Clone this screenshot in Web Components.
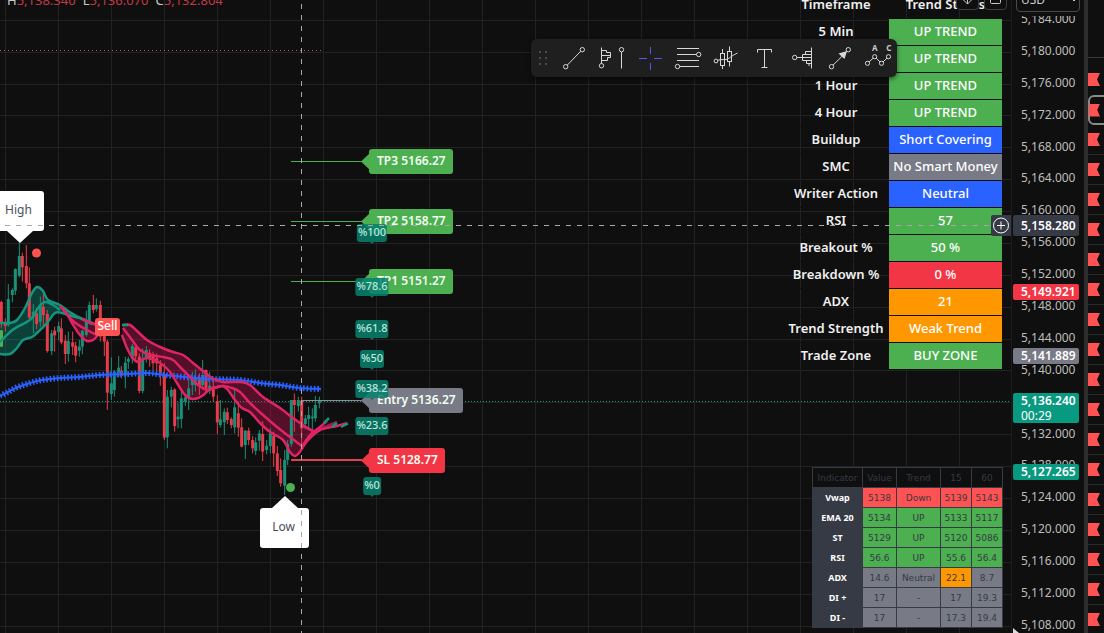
<!DOCTYPE html>
<html lang="en">
<head>
<meta charset="utf-8">
<title>Gold chart</title>
<style>
body{margin:0;background:#0f0f0f;color:#fff;font-family:"Noto Sans","Open Sans",sans-serif;overflow:hidden}
</style>
</head>
<body>
<trading-app></trading-app>
<script>
class Base extends HTMLElement{
  connectedCallback(){
    if(this.shadowRoot)return;
    this.attachShadow({mode:'open'}).innerHTML=this.render();
  }
}

customElements.define('trading-app',class extends Base{
  render(){return `<style>
    :host{display:flex;height:100vh;overflow:hidden}
    chart-pane{flex:1;min-width:0}
    .gutter{width:4px;background:#2d2d2d}
  </style><chart-pane></chart-pane><price-scale></price-scale><div class="gutter"></div><watch-strip></watch-strip>`}
});

/* ---------- plot ---------- */
// Candle series in three consecutive blocks, drawn in third-pixel units.
// Each entry: x, high, body top, body bottom, low, direction.
const SERIES=[
 {x:0,y:180,c:`4 362 366 430 445 r;16 415 425 438 455 r;25 312 357 435 440 g;37 325 330 345 367 g;46 265 267 332 345 g;58 188 228 287 292 g;67 218 228 262 305 r;79 195 258 310 325 r;88 262 310 413 417 r;100 372 395 410 460 g;110 385 400 432 447 r;121 350 375 425 440 g;130 340 380 405 445 r;142 390 402 513 518 r;155 450 460 513 525 g;164 440 452 466 515 r;176 425 438 456 480 g;184 415 445 487 493 r;196 465 482 522 552 r;205 455 483 522 545 g;218 455 487 500 525 r;227 485 497 527 547 r;238 480 500 512 530 g;247 450 452 500 523 g;259 392 422 465 470 g;268 365 375 425 428 g;280 345 375 390 400 r;289 355 375 387 395 g;301 362 375 470 485 r`},
 {x:60,y:320,c:`133 35 40 65 108 r;142 60 65 218 270 r;154 112 190 222 240 g;163 150 155 210 230 g;176 108 143 158 172 g;184 138 152 168 175 r;196 110 128 167 205 g;205 110 117 125 147 g;217 72 78 117 130 g;227 78 82 108 118 r;238 100 110 213 220 r;248 85 115 213 220 g;259 78 90 115 128 g;269 88 98 118 140 r;279 95 102 130 150 r;290 100 115 130 155 r;301 120 135 160 197 r;313 130 168 353 360 r;322 210 230 352 385 g;334 200 210 230 262 g;344 205 208 318 335 r;354 248 290 298 325 g;364 215 235 297 325 g;376 222 232 245 258 g;386 175 205 235 270 g;397 155 180 195 225 g;406 148 175 195 215 g;418 160 175 200 225 r;428 120 165 195 205 g;438 148 150 205 215 r;449 155 197 212 222 g;460 180 200 230 245 r`},
 {x:180,y:340,c:`112 165 183 247 282 r;121 180 238 255 262 g;133 205 215 247 285 g;142 203 217 240 252 r;154 232 237 255 265 r;164 150 202 262 280 g;175 185 220 263 290 r;185 235 262 320 322 r;196 270 272 315 357 g;206 263 272 300 315 r;218 288 300 325 340 r;227 292 307 333 345 g;238 270 280 302 332 g;248 243 282 335 363 r;260 300 317 330 343 g;271 265 280 318 340 g;281 275 287 340 380 r;292 318 340 393 408 r;302 355 390 430 440 r;314 330 360 437 465 g;323 300 312 360 375 g;334 180 180 312 320 g;343 160 180 195 275 r;355 170 180 198 215 g;365 170 182 265 325 r;376 225 235 252 268 g;386 200 225 237 268 g;397 205 230 235 270 g;406 168 195 235 245 g;418 170 180 190 205 g`}
];
// Smooth curve through points given in page pixels.
const curve=(s)=>{
  const p=s.split(' ').map(q=>q.split(',').map(Number));
  let d=`M${p[0]}`;
  for(let i=0;i<p.length-1;i++){
    const a=p[i-1]||p[i],b=p[i],c=p[i+1],e=p[i+2]||c;
    d+=`C${(b[0]+(c[0]-a[0])/6).toFixed(1)},${(b[1]+(c[1]-a[1])/6).toFixed(1)} ${(c[0]-(e[0]-b[0])/6).toFixed(1)},${(c[1]-(e[1]-b[1])/6).toFixed(1)} ${c}`;
  }
  return d;
};
const band=(a,b)=>curve(a)+'L'+curve(b.split(' ').reverse().join(' ')).slice(1)+'Z';

customElements.define('price-plot',class extends Base{
  render(){
    let grid='';
    for(let i=0;i<40;i++)grid+=`<line x1="${5.5+53*i}" x2="${5.5+53*i}" y1="0" y2="100%"/>`;
    for(let i=0;i<32;i++){const y=Math.floor(20.3+31.88*i)+.5;grid+=`<line x1="0" x2="100%" y1="${y}" y2="${y}"/>`}
    const col={g:'#199078',r:'#e63c4b'};
    const candles=SERIES.map(s=>`<g transform="translate(${s.x} ${s.y}) scale(.33333)">`+s.c.split(';').map(r=>{
      const [x,h,t,b,l,k]=r.split(' ');
      return `<rect x="${x-1.5}" y="${h}" width="3" height="${l-h}" fill="${col[k]}"/><rect x="${x-4.5}" y="${t}" width="9" height="${b-t}" fill="${col[k]}"/>`}).join('')+'</g>').join('');
    const gU='0,323 10,323 17,320 25,308 32,293 37,287 43,291 48,300 60,305 68,311 80,318 92,324';
    const gM='0,342 10,332 17,327 25,323 32,318 38,308 45,302 53,305 60,310';
    const gL='0,354 10,354 17,348 23,340 32,337 38,332 47,323 55,313 62,313 68,315 80,318 92,323 100,326';
    const p1U='60,306 68,313 80,316 92,323 100,326';
    const p1L='60,306 67,314 72,323 80,335 87,341 93,340 100,333';
    const p2U='123,325 130,325 137,331 147,340 160,347 173,352 183,355 193,363 203,371 212,378 223,382 240,382 250,385 263,397 280,408 293,418 303,425 313,431';
    const p2M='123,328 132,340 140,350 150,355 163,357 173,360 180,367 188,375 198,385 208,390 222,386 232,388 240,392 250,403 263,415 277,427 290,437 303,447';
    const p2L='122,335 127,348 132,357 138,362 147,358 160,363 170,372 177,383 185,395 193,399 202,396 210,389 217,387 223,386 228,390 235,400 242,408 250,412 260,423 270,432 283,440 290,452 295,456 299,453 303,447';
    const ema='0,396 8,392 18,387 30,383 42,380 60,378 80,377 100,375 127,374 147,373 165,375 185,377 212,379 240,380 260,383 280,385 300,388 321,389';
    const pk='fill="none" stroke="#df2465" stroke-width="2.500"',gn='fill="none" stroke="#15947f" stroke-width="2.500"';
    return `<style>:host{display:block;position:absolute;inset:0}svg{display:block;width:100%;height:100%}</style>
    <svg aria-hidden="true">
      <g stroke="#222222">${grid}</g>
      <line x1="0" x2="321" y1="50.5" y2="50.5" stroke="#a06455" stroke-dasharray="1 3"/>
      <line x1="0" x2="100%" y1="401.5" y2="401.5" stroke="#1a9a7c" stroke-dasharray="1 2"/>
      <path d="${band(gU,gL)}" fill="#089981" fill-opacity=".36"/>
      <path d="${band(p1U,p1L)}" fill="#e0105f" fill-opacity=".33"/>
      <path d="${band(p2U,p2L)}" fill="#e0105f" fill-opacity=".33"/>
      ${candles}
      <rect x="0" y="330" width="3" height="17" rx="1" fill="#4caf50"/>
      <path d="${curve(ema)}" fill="none" stroke="#2962ff" stroke-width="2"/>
      <path d="${curve(ema)}" fill="none" stroke="#2962ff" stroke-width="6" stroke-dasharray="1.6 1.933"/>
      <path d="${curve(gU)}" ${gn}/><path d="${curve(gM)}" ${gn}/><path d="${curve(gL)}" ${gn}/>
      <path d="${curve(p1L)}" ${pk}/><path d="${curve('62,308 73,321 87,330 97,335')}" ${pk}/><path d="${curve('82,319 92,323 100,326')}" ${pk}/>
      <path d="${curve(p2U)}" ${pk}/><path d="${curve(p2M)}" ${pk}/><path d="${curve(p2L)}" ${pk}/>
      <path d="${curve('303,447 308,440 320,430 337,426 347,423')}" ${pk}/>
      <path d="${curve('303,445 310,435 320,427 327,421')}" ${pk}/>
      <path d="${curve('303,426 313,431 322,428 337,422')}" ${pk} opacity=".7"/>
      <path d="M324,423L329,418M332,427L337,423M341,427L348,423.5M122,325L128,325" ${gn}/>
      <circle cx="36.5" cy="253" r="4.5" fill="#ff5252"/>
      <circle cx="290.500" cy="487.500" r="4.500" fill="#4caf50"/>
      <path d="M291 161.500H362M291 221.500H362M291 281.500H362" stroke="#4caf50"/>
      <path d="M302 400.500H362" stroke="#8a8d96"/><path d="M291 460H362" stroke="#dc4450" stroke-width="2"/>
    </svg>`}
});

/* ---------- chart labels ---------- */
customElements.define('level-tag',class extends Base{
  render(){return `<style>
    :host{display:block;position:absolute;z-index:1;left:361px;height:25px;padding:0 7px 0 16px;font:600 12px/24px "Noto Sans",sans-serif;color:#f4fff4;white-space:nowrap;--c:#4caf50}
    :host([kind=entry]){--c:#787b86}
    :host([kind=stop]){--c:#f23645}
    i{position:absolute;z-index:-1;inset:0 0 0 8px;background:var(--c);border-radius:3px}
    b{position:absolute;z-index:-1;left:0;top:4px;width:9px;height:17px;background:var(--c);clip-path:polygon(0 50%,100% 0,100% 100%)}
  </style><i></i><b></b><slot></slot>`}
});
customElements.define('fib-tag',class extends Base{
  render(){return `<style>
    :host{display:block;position:absolute;z-index:2;left:372px;transform:translateX(-50%);height:18px;padding:0 1px;border-radius:3px;background:rgba(8,128,110,.86);color:#b9e6dc;font:500 11px/16px "Noto Sans",sans-serif;white-space:nowrap}
    :host::after{content:"";position:absolute;left:50%;top:18px;width:4px;height:2px;margin-left:-2px;background:#08705f;clip-path:polygon(0 0,100% 0,50% 100%)}
  </style><slot></slot>`}
});
customElements.define('pivot-label',class extends Base{
  render(){return `<style>
    :host{display:block;box-sizing:border-box;position:absolute;width:49px;height:40px;padding-right:2px;border-radius:3px;background:#fff;color:#4b4e58;font:12px/38px "Noto Sans",sans-serif;text-align:center}
    :host::after{content:"";position:absolute;left:12px;top:40px;width:26px;height:12px;background:#fff;clip-path:polygon(0 0,100% 0,50% 100%)}
    :host([up])::after{top:-12px;clip-path:polygon(0 100%,100% 100%,50% 0)}
  </style><slot></slot>`}
});

/* ---------- drawing toolbar ---------- */
const TOOLS=[
 ['Trend line','<circle cx="11.700" cy="27.700" r="2.200"/><circle cx="28.300" cy="10.700" r="2.200"/><path d="M13.300 26.100L26.700 12.300"/>'],
 ['Fixed range volume profile','<path d="M9.500 8.500V24.500M9.500 11.500H14.500V13.500H18.500V18.500H15.500V21.500H9.500M9.500 16.500H18.500M29.500 13V29.500"/><circle cx="9.500" cy="26.700" r="2.200"/><circle cx="29.500" cy="10.700" r="2.200"/>'],
 ['Cross line','<path stroke="#4a5bf0" d="M20.500 8V15M20.500 24V31M9 19.500H17M24 19.500H32"/>'],
 ['Fib retracement','<path d="M9 9.500H31M9 15.500H28.500M9 21.500H31M11.500 27.500H31"/><circle cx="30.700" cy="15.500" r="2.200"/><circle cx="9.500" cy="27.500" r="2.200"/>'],
 ['Bars pattern','<rect x="14.500" y="14.500" width="4" height="12"/><rect x="21.500" y="12.500" width="4" height="10"/><path d="M16.500 10V14.500M16.500 26.500V30M23.500 7.500V12.500M23.500 22.500V27.500M12 21.300C15 20 17 21 20 20.500S25 17 31.500 14"/><circle cx="10" cy="22" r="1.900"/>'],
 ['Text','<path d="M13.500 13.500V10.500H27.500V13.500M20.500 10.500V28.500M17.500 28.500H23.500"/>'],
 ['Anchored volume profile','<path d="M29.500 8.500V29.500M29.500 12.500H23.500V15.500M29.500 15.500H20.500V18.500M14.900 18.500H29.500M20.500 18.500V21.500H29.500M24.500 21.500V24.500H29.500M27 24.500V27"/><circle cx="12.700" cy="18.500" r="2.200"/>'],
 ['Arrow','<circle cx="11.500" cy="27.700" r="2.200"/><circle cx="28.300" cy="10.700" r="2.200"/><path d="M13 26.200L22 17.300"/><path fill="#d8d8d8" stroke="none" d="M27 12L24.500 20L18.500 14.500Z"/>'],
 ['ABCD pattern','<circle cx="9.500" cy="24.300" r="2.100"/><circle cx="16.700" cy="17.700" r="2.100"/><circle cx="23.500" cy="24.300" r="2.100"/><circle cx="30.500" cy="17.700" r="2.100"/><path d="M11 22.900L15.200 19.200M18.200 19.200L22 22.900M25 22.900L29 19.200"/><text x="16.700" y="12">A</text><text x="30.700" y="12">C</text>']
];
customElements.define('draw-toolbar',class extends Base{
  render(){return `<style>
    :host{display:flex;position:absolute;z-index:4;right:114px;top:39px;height:38px;padding-right:1px;border-radius:6px;background:#1f1f1f;box-shadow:0 2px 4px rgba(0,0,0,.5)}
    .grip{width:23px;display:grid;grid-template-columns:2px 2px;gap:4px;place-content:center}
    .grip i{width:2px;height:2px;background:#4a4a4a}
    button{width:38px;height:38px;padding:0;border:0;background:none;color:#d8d8d8}
    svg{display:block;width:38px;height:38px;fill:none;stroke:currentColor}
    text{font:700 8px "Noto Sans",sans-serif;text-anchor:middle;fill:#c8c8c8;stroke:none}
  </style><div class="grip">${'<i></i>'.repeat(6)}</div>${TOOLS.map(([n,p])=>`<button aria-label="${n}"><svg viewBox="0 0 38 38">${p}</svg></button>`).join('')}`}
});

/* ---------- tables ---------- */
customElements.define('trend-board',class extends Base{
  render(){
    const rows=[['5 Min','UP TREND','g'],['15 Min','UP TREND','g'],['1 Hour','UP TREND','g'],['4 Hour','UP TREND','g'],['Buildup','Short Covering','b'],['SMC','No Smart Money','k'],['Writer Action','Neutral','b'],['RSI','57','g'],['Breakout %','50 %','g'],['Breakdown %','0 %','r'],['ADX','21','o'],['Trend Strength','Weak Trend','o'],['Trade Zone','BUY ZONE','g']];
    return `<style>
    :host{display:block;position:absolute;right:9px;top:-8px;z-index:1}
    table{border-collapse:collapse;table-layout:fixed;width:219px}
    th,td{height:26px;padding:0;border-bottom:1px solid #0f0f0f;font:600 13px/24px "Noto Sans",sans-serif;text-align:center;vertical-align:top;white-space:nowrap;color:#f0f0f0}
    td{font-weight:500;color:#fff}
    .l{width:106px}.v{width:113px}
    .g{background:#4caf50}.b{background:#2962ff}.k{background:#787b86}.r{background:#f23645}.o{background:#ff9800}
  </style><table><thead><tr><th class="l">Timeframe</th><th class="v">Trend Status</th></tr></thead><tbody>${rows.map(r=>`<tr><th scope="row">${r[0]}</th><td class="${r[2]}">${r[1]}</td></tr>`).join('')}</tbody></table>`}
});
customElements.define('indicator-table',class extends Base{
  render(){
    const rows=[['Vwap','r','5138','Down','5139','5143'],['EMA 20','g','5134','UP','5133','5117'],['ST','g','5129','UP','5120','5086'],['RSI','g','56.6','UP','55.6','56.4'],['ADX','k','14.6','Neutral','22.1','8.7'],['DI +','k','17','-','17','19.3'],['DI -','k','17','-','17.3','19.4']];
    return `<style>
    :host{display:block;position:absolute;right:8px;top:467px;z-index:1}
    table{border-collapse:collapse;table-layout:fixed;width:191px}
    th,td{height:19px;padding:0;border:1px solid #363a45;font:9px/18px "DejaVu Sans",sans-serif;text-align:center;white-space:nowrap;color:#363a45}
    tbody th{background:#363a45;color:#fff;font:700 9px/18px "Noto Sans",sans-serif}
    thead th{background:#0f0f0f}
    .r td{background:#ff5252}.g td{background:#4caf50}.k td{background:#787b86}.k td.o{background:#ff9800}
  </style><table><colgroup><col style="width:50px"><col style="width:34px"><col style="width:44px"><col style="width:31px"><col style="width:31px"></colgroup><thead><tr>${['Indicator','Value','Trend','15','60'].map(t=>`<th scope="col">${t}</th>`).join('')}</tr></thead><tbody>${rows.map(([n,k,...v])=>`<tr class="${k}"><th scope="row">${n}</th>${v.map(t=>`<td${t=='22.1'?' class="o"':''}>${t}</td>`).join('')}</tr>`).join('')}</tbody></table>`}
});

/* ---------- chart pane ---------- */
customElements.define('chart-pane',class extends Base{
  render(){return `<style>
    :host{display:block;position:relative;overflow:hidden;border-right:1px solid #1c1c1c}
    .ohlc{position:absolute;left:7px;top:-8px;display:flex;gap:7px;font-size:13px;line-height:16px;color:#c23a48}
    .ohlc b{font-weight:400;color:#c8c8c8}
    .sell{position:absolute;z-index:1;left:95px;top:318px;width:25px;height:18px;border-radius:3px;background:#ff5252;font:500 12px/16px "Noto Sans",sans-serif;text-align:center}
    .cross{position:absolute;inset:0;z-index:3;width:100%;height:100%;pointer-events:none}
    .tools{position:absolute;z-index:2;right:4px;top:-13px;display:flex;gap:5px}
    .tools button{width:23px;height:23px;padding:0;border:1px solid #3c3c3c;border-radius:4px;background:#0f0f0f;color:#c8c8c8}
    .tools svg,.add svg{display:block;fill:none;stroke:currentColor}
    .add{position:absolute;z-index:4;right:0;top:215px;width:20px;height:21px;padding:0;border:0;border-radius:2px 0 0 2px;background:#363a45;color:#fff}
  </style>
  <price-plot></price-plot>
  <div class="ohlc"><span><b>H</b>5,138.340</span><span><b>L</b>5,136.070</span><span><b>C</b>5,132.804</span></div>
  <pivot-label style="left:-5px;top:191px">High</pivot-label>
  <pivot-label up style="left:260px;top:508px">Low</pivot-label>
  <div class="sell">Sell</div>
  <level-tag style="top:149px">TP3 5166.27</level-tag>
  <level-tag style="top:209px">TP2 5158.77</level-tag>
  <level-tag style="top:269px">TP1 5151.27</level-tag>
  <level-tag kind="entry" style="top:388px">Entry 5136.27</level-tag>
  <level-tag kind="stop" style="top:448px">SL 5128.77</level-tag>
  <fib-tag style="top:224px">%100</fib-tag><fib-tag style="top:278px">%78.6</fib-tag><fib-tag style="top:320px">%61.8</fib-tag><fib-tag style="top:350px">%50</fib-tag><fib-tag style="top:380px">%38.2</fib-tag><fib-tag style="top:417px">%23.6</fib-tag><fib-tag style="top:477px">%0</fib-tag>
  <trend-board></trend-board><indicator-table></indicator-table>
  <div class="tools"><button aria-label="Move pane down"><svg width="21" height="21"><path d="M10.500 4V16M6.500 12L10.500 16L14.500 12"/></svg></button><button aria-label="Maximize pane"><svg width="21" height="21"><rect x="5.500" y="5.500" width="10" height="10" rx="1"/></svg></button></div>
  <svg class="cross" aria-hidden="true" stroke="#a8a8a8"><line x1="5" x2="100%" y1="225.500" y2="225.500" stroke-dasharray="5 6"/><line x1="301.500" x2="301.500" y1="4" y2="100%" stroke-dasharray="5 6"/></svg>
  <button class="add" aria-label="Add order at price"><svg width="20" height="21"><circle cx="10" cy="10.500" r="7.500"/><path d="M6 10.500H14M10 6.500V14.500"/></svg></button>
  <draw-toolbar></draw-toolbar>`}
});

/* ---------- price scale ---------- */
customElements.define('price-scale',class extends Base{
  render(){
    const t=[];for(let p=5184;p>=5108;p-=4)t.push(`<li>${p.toLocaleString('en-US')}.000</li>`);
    return `<style>
    :host{display:block;position:relative;width:72px;font-size:12px;line-height:16px;color:#bdbdbd;overflow:hidden}
    ul{box-sizing:border-box;height:100%;margin:0;padding:11px 0 0 9px;list-style:none;display:flex;flex-direction:column;justify-content:space-between}
    .top{position:absolute;z-index:1;left:0;right:0;top:0;height:16px;background:#0f0f0f}
    select{position:absolute;left:4px;top:-12px;width:64px;height:24px;padding:0 4px;appearance:none;border:1px solid #4a4a4a;border-radius:4px;background:#0f0f0f;color:#c8c8c8;font:12px/20px "Noto Sans",sans-serif}
    .top svg{position:absolute;left:58px;top:-3px;fill:none;stroke:#c8c8c8}
    .tag{position:absolute;left:1px;width:58px;padding-left:8px;border-radius:2px;color:#fff;font-weight:600}
    .cursor{position:absolute;left:1px;bottom:0}
  </style>
  <div class="top"><select aria-label="Currency"><option>USD</option></select><svg width="8" height="6"><path d="M1 1L4 4L7 1"/></svg></div>
  <ul>${t.join('')}</ul>
  <div class="tag" style="top:215px;background:#363a45;line-height:21px">5,158.280</div>
  <div class="tag" style="top:284px;background:#f23645">5,149.921</div>
  <div class="tag" style="top:348px;background:#787b86">5,141.889</div>
  <div class="tag" style="top:393px;background:#089981;line-height:15px">5,136.240<div style="font-weight:400">00:29</div></div>
  <div class="tag" style="top:464px;background:#089981">5,127.265</div>
  <svg class="cursor" width="6" height="5" aria-hidden="true"><path d="M0 0L6 5H0Z" fill="#ddd"/></svg>`}
});

/* ---------- watchlist edge ---------- */
customElements.define('watch-strip',class extends Base{
  render(){return `<style>
    :host{display:block;width:16px;height:100vh;overflow:hidden}
    header{height:57px;border-bottom:1px solid #3a3a3a;margin-bottom:7px}
    .row{box-sizing:border-box;height:30px;border-bottom:1px solid #2a2a2a;display:flex;align-items:center}
    .row:nth-of-type(-n+2){border-color:transparent}
    .row.on{width:40px;border:2px solid #8a8a8a;border-radius:6px}
    .row.on i{margin-left:-1px;width:11px}
    i{width:12px;height:13px;background:#ff5252;clip-path:polygon(0 0,100% 0,75% 50%,100% 100%,0 100%)}
  </style><header></header>${Array.from({length:19},(_,i)=>`<div class="row${i==1?' on':''}"><i></i></div>`).join('')}`}
});
</script>
</body>
</html>
